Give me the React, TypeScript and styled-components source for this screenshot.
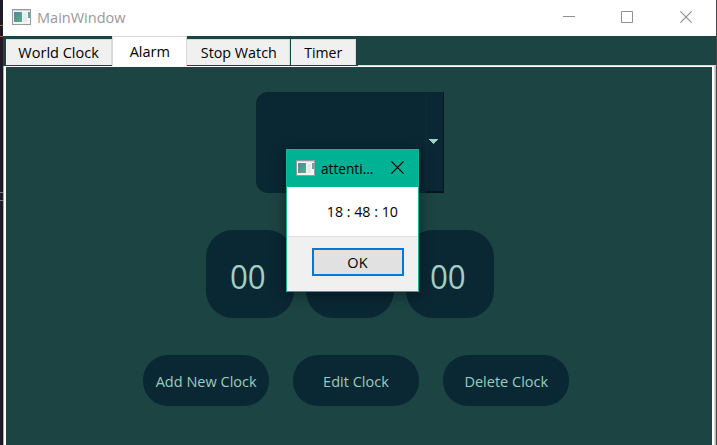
import React from "react";
import styled, { createGlobalStyle } from "styled-components";

const Global = createGlobalStyle`
  * { box-sizing: border-box; }
  body { margin: 0; overflow: hidden; font-family: "Open Sans", "Noto Sans", sans-serif; font-size: 15px; }
`;

const Desktop = styled.div`
  position: relative;
  display: flex;
  width: 717px;
  height: 445px;
  padding: 0 1px 0 3px;
  overflow: hidden;
  background: linear-gradient(90deg, #1d1b26 3px, #48484a 3px);
`;
const EdgeMark = styled.i<{ $top: number; $height: number; $color: string }>`
  position: absolute;
  left: 0;
  top: ${(p) => p.$top}px;
  width: 3px;
  height: ${(p) => p.$height}px;
  border: 1px solid ${(p) => p.$color};
  border-right: 0;
  border-left: 0;
`;
const Window = styled.div`
  width: 713px;
  height: 445px;
  display: flex;
  flex-direction: column;
  background: #1c4443;
`;
const TitleBar = styled.header`
  height: 36px;
  flex: none;
  display: flex;
  align-items: center;
  background: #fff;
  padding: 0 24px 2px 9px;
  color: #999;
`;
const Text = styled.span<{ $scale?: number; $origin?: string }>`
  display: inline-block;
  white-space: pre;
  line-height: 20px;
  transform: scaleX(${(p) => p.$scale ?? 0.968});
  transform-origin: ${(p) => p.$origin ?? "center"};
`;
const WindowTitle = styled.div`
  flex: 1;
  margin: 0 0 0 6px;
`;
const Controls = styled.div`
  display: flex;
  gap: 46px;
  & > :nth-child(2) { margin-right: 1px; }
`;
const Tabs = styled.nav`
  height: 29px;
  flex: none;
  display: flex;
  align-items: flex-start;
  padding-left: 3px;
`;
const Tab = styled.div<{ $width: number; $active?: boolean; $gap?: number }>`
  width: ${(p) => p.$width}px;
  height: ${(p) => (p.$active ? 30 : 26)}px;
  margin-top: ${(p) => (p.$active ? 0 : 3)}px;
  margin-right: ${(p) => p.$gap ?? 0}px;
  display: flex;
  align-items: center;
  justify-content: center;
  flex: none;
  background: ${(p) => (p.$active ? "#fff" : "#f0f0f0")};
  border: 1px solid #d9d9d9;
  border-bottom: 0;
  border-left-width: ${(p) => (p.$active ? 1 : 0)}px;
  padding: 0 0 1px ${(p) => (p.$active ? 0 : 1)}px;
`;
const Pane = styled.main`
  flex: 1;
  border: solid #fff;
  border-width: 1px 2px 0 2px;
  margin: 1px 2px 0 1px;
  box-shadow: -1px 0 #a9a9aa, 1px 0 #d0d0d0, 2px 0 #bcbcbc;
  background: #1c4443;
`;
const PaneLine = styled.div`
  height: 1px;
  flex: 1;
  margin-left: 2px;
  align-self: flex-end;
  background: #d9d9d9;
  transform: translateY(1px);
`;
const Combo = styled.div`
  width: 188px;
  height: 101px;
  margin: 25px 0 0 250px;
  display: flex;
  justify-content: flex-end;
  background: #0a2734;
  border-radius: 12px 0 0 12px;
`;
const DropButton = styled.div`
  width: 18px;
  height: 101px;
  border: solid #03151e;
  border-width: 1px 1px 2px 0;
  border-top-color: #0c2330;
  box-shadow: inset 1px 0 #0d2c39;
  display: flex;
  align-items: center;
  justify-content: center;
  padding: 0 3px 2px 0;
`;
const Row = styled.div<{ $top: number; $left: number; $gap: number }>`
  display: flex;
  gap: ${(p) => p.$gap}px;
  margin: ${(p) => p.$top}px 0 0 ${(p) => p.$left}px;
`;
const Digit = styled.div`
  width: 88px;
  height: 88px;
  border-radius: 27px;
  background: #0a2734;
  color: #a2d0c1;
  font-size: 33px;
  font-weight: 400;
  display: flex;
  align-items: center;
  justify-content: center;
  padding: 6px 5px 0 0;
`;
const Pill = styled.button`
  width: 126px;
  height: 51px;
  border: 0;
  border-radius: 25px;
  background: #0a2734;
  color: #9bcdbf;
  font: inherit;
  padding: 0;
  display: flex;
  align-items: center;
  justify-content: center;
`;
const Dialog = styled.section`
  position: absolute;
  left: 286px;
  top: 149px;
  width: 133px;
  height: 143px;
  border: 1px solid #18b294;
  background: #f0f0f0;
  box-shadow: 0 3px 14px rgba(0, 0, 0, 0.4);
  color: #000;
`;
const DialogTitle = styled.header`
  height: 37px;
  display: flex;
  align-items: center;
  background: #00b294;
  padding: 0 14px 2px 9px;
  color: #000;
`;
const DialogName = styled.div`
  flex: 1;
  min-width: 0;
  margin: 0 0 0 6px;
`;
const Message = styled.div`
  height: 50px;
  background: #fff;
  border-bottom: 1px solid #dfdfdf;
  display: flex;
  align-items: center;
  justify-content: flex-end;
  padding: 0 20px 2px 0;
`;
const OkButton = styled.button`
  width: 92px;
  height: 28px;
  margin: 11px 0 0 25px;
  padding: 0 2px 1px 0;
  background: #e1e1e1;
  border: 2px solid #0078d7;
  border-radius: 0;
  font: inherit;
  color: #000;
  display: flex;
  align-items: center;
  justify-content: center;
`;

const AppIcon = () => (
  <svg width="19" height="16" viewBox="0 0 19 16" shapeRendering="crispEdges">
    <defs>
      <linearGradient id="screen" x1="0" y1="0" x2="1" y2="1">
        <stop offset="0" stopColor="#4d86a6" />
        <stop offset="1" stopColor="#5bb078" />
      </linearGradient>
    </defs>
    <rect x="0.5" y="0.5" width="18" height="15" fill="#f4f4f4" stroke="#98999e" />
    <rect x="1" y="1" width="17" height="1" fill="#cfd3da" />
    <rect x="2" y="3" width="8" height="10" fill="url(#screen)" />
    <rect x="11" y="4" width="4" height="9" fill="#e5eaea" />
    <rect x="16" y="3" width="2" height="6" fill="#68a69b" />
  </svg>
);

const Cross = ({ color, size }: { color: string; size: number }) => (
  <svg width={size} height={size} viewBox="0 0 12 12">
    <path d="M.4.4 11.6 11.6M11.6.4.4 11.6" stroke={color} strokeWidth="1.1" />
  </svg>
);

export default function App() {
  return (
    <Desktop>
      <Global />
      <EdgeMark $top={25} $height={12} $color="#a25c3c" />
      <EdgeMark $top={192} $height={9} $color="#77777d" />
      <Window>
        <TitleBar>
          <AppIcon />
          <WindowTitle><Text $origin="left">MainWindow</Text></WindowTitle>
          <Controls>
            <svg width="12" height="12"><path d="M0 5.5h12" stroke="#909090" /></svg>
            <svg width="12" height="12"><path d="M.5.5h11v11H.5z" stroke="#909090" fill="none" /></svg>
            <Cross color="#8c8c8c" size={12} />
          </Controls>
        </TitleBar>
        <Tabs>
          <Tab $width={106}><Text>World Clock</Text></Tab>
          <Tab $width={75} $active><Text>Alarm</Text></Tab>
          <Tab $width={103} $gap={1}><Text $scale={0.955}>Stop Watch</Text></Tab>
          <Tab $width={65}><Text $scale={0.94}>Timer</Text></Tab>
          <PaneLine />
        </Tabs>
        <Pane>
          <Combo>
            <DropButton>
              <svg width="9" height="5" shapeRendering="crispEdges"><path d="M0 0h9L4.5 5z" fill="#a2d0c1" /></svg>
            </DropButton>
          </Combo>
          <Row $top={37} $left={200} $gap={12}>
            <Digit><Text $scale={0.95}>00</Text></Digit>
            <Digit />
            <Digit><Text $scale={0.95}>00</Text></Digit>
          </Row>
          <Row $top={37} $left={137} $gap={24}>
            <Pill><Text>Add New Clock</Text></Pill>
            <Pill><Text>Edit Clock</Text></Pill>
            <Pill><Text>Delete Clock</Text></Pill>
          </Row>
        </Pane>
      </Window>
      <Dialog>
        <DialogTitle>
          <AppIcon />
          <DialogName><Text $origin="left" $scale={0.91}>attenti...</Text></DialogName>
          <Cross color="#000" size={13} />
        </DialogTitle>
        <Message><Text $origin="right" $scale={0.95}>18 : 48 : 10</Text></Message>
        <OkButton><Text>OK</Text></OkButton>
      </Dialog>
    </Desktop>
  );
}
